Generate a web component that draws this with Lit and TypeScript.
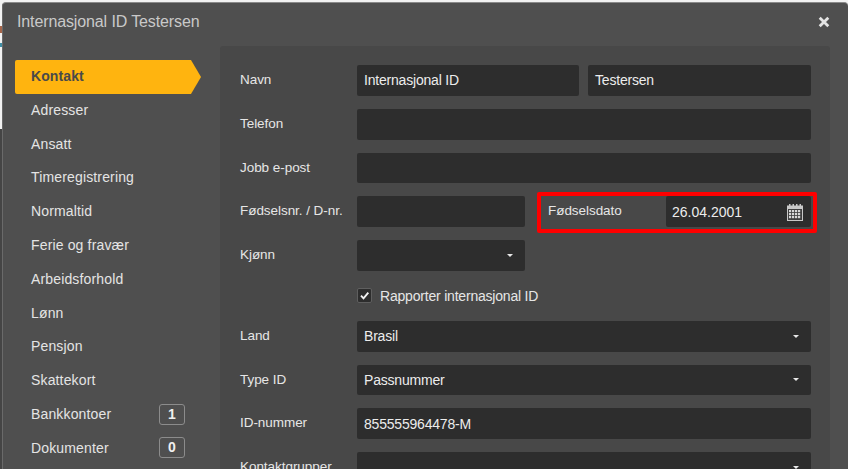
import { LitElement, css, html, nothing, svg } from 'lit';
import { customElement, property } from 'lit/decorators.js';

const NAV = [
  { label: 'Kontakt', active: true },
  { label: 'Adresser' },
  { label: 'Ansatt' },
  { label: 'Timeregistrering' },
  { label: 'Normaltid' },
  { label: 'Ferie og fravær' },
  { label: 'Arbeidsforhold' },
  { label: 'Lønn' },
  { label: 'Pensjon' },
  { label: 'Skattekort' },
  { label: 'Bankkontoer', count: 1 },
  { label: 'Dokumenter', count: 0 },
];

const calendarIcon = svg`<svg class="cal" viewBox="0 0 18 18" width="18" height="18">
  <path fill="#c8c8c8" d="M1 2.5h2V1h1.5v1.5h2V1H8v1.5h2V1h1.5v1.5h2V1H15v1.5h2V18H1z"/>
  <rect x="2" y="6" width="14" height="11" fill="#3f3f3f"/>
  ${[7, 10, 13].flatMap((y) =>
    [3, 6, 9, 12].map((x) => svg`<rect x=${x} y=${y} width="2.2" height="2.2" fill="#d8d8d8"/>`),
  )}
</svg>`;

@customElement('text-field')
export class TextField extends LitElement {
  static styles = css`
    :host {
      display: block;
      min-width: 0;
    }
    .box {
      display: flex;
      align-items: center;
      justify-content: space-between;
      height: 30.75px;
      padding: 0 7px;
      background: #2d2d2d;
      border-radius: 2px;
      color: #ececec;
      font-size: 14px;
      letter-spacing: -0.2px;
    }
    .box.date {
      padding-left: 6px;
      letter-spacing: 0;
    }
    .caret {
      width: 0;
      height: 0;
      margin-right: 5px;
      border-left: 3px solid transparent;
      border-right: 3px solid transparent;
      border-top: 3px solid #e8e8e8;
    }
  `;

  @property() value = '';
  @property() kind = '';

  render() {
    return html`<div class="box ${this.kind}">
      <span>${this.value}</span>
      ${this.kind === 'select' ? html`<i class="caret"></i>` : nothing}
      ${this.kind === 'date' ? calendarIcon : nothing}
    </div>`;
  }
}

@customElement('app-root')
export class AppRoot extends LitElement {
  static styles = css`
    :host {
      display: block;
      height: 469px;
      overflow: hidden;
      /* page behind the dialog only shows as a sliver on the left edge */
      background:
        linear-gradient(#a5654a, #a5654a) 0 26px / 2px 7px no-repeat,
        linear-gradient(#3f8ea5, #3f8ea5) 0 43px / 2px 4px no-repeat,
        linear-gradient(#454545, #454545) 0 129px / 2px 340px no-repeat,
        #f2f2f2;
      font-family: 'Liberation Sans', Arial, sans-serif;
    }
    .dialog {
      height: 500px;
      margin: 2px 0 0 2px;
      background: #4f4f4f;
      border-top: 1px solid #8a8a8a;
      border-left: 1px solid #6a6a6a;
      border-radius: 4px 4px 0 0;
    }
    .head {
      display: flex;
      align-items: center;
      justify-content: space-between;
      height: 37px;
      padding: 0 18px 2px 14px;
      color: #c9c9c9;
      font-size: 16px;
      letter-spacing: -0.12px;
    }
    .close {
      width: 12px;
      height: 12px;
    }
    .body {
      display: flex;
      align-items: flex-start;
      padding: 4px 18px 0 12px;
    }
    nav {
      width: 205px;
      flex: none;
      padding-top: 14px;
      font-size: 14px;
      letter-spacing: 0.15px;
      color: #e4e4e4;
    }
    .item {
      display: flex;
      align-items: center;
      justify-content: space-between;
      width: 170px;
      height: 33.8px;
      padding-left: 16px;
      box-sizing: border-box;
    }
    .item.active {
      width: 186px;
      height: 34px;
      margin-bottom: -1px;
      padding-bottom: 2px;
      font-weight: 700;
      letter-spacing: 0.1px;
      color: #4a4a4a;
      background: #ffb40f;
      border-radius: 2px 0 0 2px;
      clip-path: polygon(0 0, 176px 0, 100% 50%, 176px 100%, 0 100%);
    }
    .count {
      width: 26px;
      height: 21px;
      box-sizing: border-box;
      border: 1px solid #8c8c8c;
      border-radius: 3px;
      text-align: center;
      line-height: 19px;
      font-weight: 700;
      font-size: 14px;
      color: #f0f0f0;
    }
    .panel {
      flex: 1;
      min-width: 0;
      height: 430px;
      padding: 19px 19px 0 20px;
      background: #484848;
      border-radius: 3px 3px 0 0;
      color: #e6e6e6;
      font-size: 13.5px;
      letter-spacing: -0.05px;
      display: grid;
      grid-template-columns: 117px 168px 1fr;
      grid-template-rows: repeat(5, 30.75px) 24px repeat(4, 30.75px);
      row-gap: 13px;
      align-items: start;
    }
    label {
      line-height: 29px;
      white-space: nowrap;
    }
    .wide {
      grid-column: 2 / 4;
    }
    .names {
      grid-column: 2 / 4;
      display: grid;
      grid-template-columns: 222px 1fr;
      gap: 9px;
    }
    .date {
      position: relative;
      display: grid;
      grid-template-columns: 125px 1fr;
      margin-left: 16px;
    }
    .date::after {
      content: '';
      position: absolute;
      top: -4px;
      right: -6px;
      bottom: -6px;
      left: -4px;
      border: 4px solid #fe0000;
      border-radius: 2px;
      pointer-events: none;
    }
    .date label {
      padding-left: 7px;
    }
    .check {
      grid-column: 2 / 4;
      display: flex;
      align-items: center;
      gap: 8px;
      height: 24px;
      font-size: 14px;
      letter-spacing: -0.2px;
    }
    .box {
      width: 15px;
      height: 15px;
      box-sizing: border-box;
      background: #2d2d2d;
      border: 1px solid #5f5f5f;
      border-radius: 2px;
    }
    .box svg {
      display: block;
    }
  `;

  render() {
    return html`<div class="dialog">
      <div class="head">
        <span>Internasjonal ID Testersen</span>
        <svg class="close" viewBox="0 0 12 12">
          <path d="M1.7 1.7l8.6 8.6M10.3 1.7l-8.6 8.6" stroke="#e4e4e4" stroke-width="2.8" fill="none" />
        </svg>
      </div>
      <div class="body">
        <nav>
          ${NAV.map(
            (n) => html`<div class="item ${n.active ? 'active' : ''}">
              <span>${n.label}</span>
              ${n.count !== undefined ? html`<span class="count">${n.count}</span>` : nothing}
            </div>`,
          )}
        </nav>
        <section class="panel">
          <label>Navn</label>
          <div class="names">
            <text-field value="Internasjonal ID"></text-field>
            <text-field value="Testersen"></text-field>
          </div>

          <label>Telefon</label>
          <text-field class="wide"></text-field>

          <label>Jobb e-post</label>
          <text-field class="wide"></text-field>

          <label>Fødselsnr. / D-nr.</label>
          <text-field></text-field>
          <div class="date">
            <label>Fødselsdato</label>
            <text-field kind="date" value="26.04.2001"></text-field>
          </div>

          <label>Kjønn</label>
          <text-field kind="select"></text-field>
          <span></span>

          <span></span>
          <div class="check">
            <span class="box">
              <svg viewBox="0 0 13 13" width="13" height="13">
                <path d="M3 6.7l2.5 2.6 4.8-5.6" stroke="#f2f2f2" stroke-width="1.9" fill="none" />
              </svg>
            </span>
            Rapporter internasjonal ID
          </div>

          <label>Land</label>
          <text-field class="wide" kind="select" value="Brasil"></text-field>

          <label>Type ID</label>
          <text-field class="wide" kind="select" value="Passnummer"></text-field>

          <label>ID-nummer</label>
          <text-field class="wide" value="855555964478-M"></text-field>

          <label>Kontaktgrupper</label>
          <text-field class="wide" kind="select"></text-field>
        </section>
      </div>
    </div>`;
  }
}
